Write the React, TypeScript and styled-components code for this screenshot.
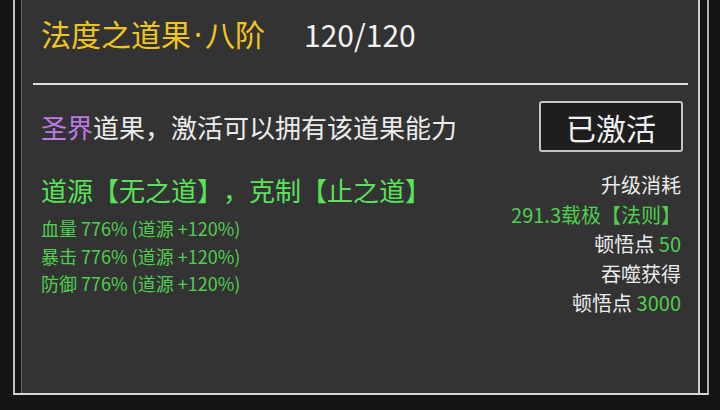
import styled, { createGlobalStyle } from 'styled-components'

const GlobalStyle = createGlobalStyle`
  html, body {
    margin: 0;
    padding: 0;
    background: #141414;
  }
  body {
    font-family: "Noto Sans CJK SC", "Noto Sans", sans-serif;
    color: #ececec;
    text-spacing-trim: space-all;
  }
`

const Frame = styled.div`
  box-sizing: border-box;
  margin-left: 13px;
  width: 696px;
  height: 395px;
  padding: 0 7px 0 6px;
  border-left: 2px solid #bdbdbd;
  border-right: 2px solid #b0b0b0;
  border-bottom: 2px solid #d6d6d6;
  background: #141414;
`

const Panel = styled.div`
  box-sizing: border-box;
  height: 100%;
  background: #333333;
  border-left: 1px solid #6a6a6a;
  border-right: 2px solid #cfcfcf;
  display: flex;
  flex-direction: column;
`

const Header = styled.div`
  display: flex;
  align-items: center;
  padding: 14px 0 0 19px;
  height: 40px;
`

const Title = styled.span`
  font-size: 30px;
  line-height: 40px;
  color: #f0c520;
`

// the reference uses a narrow latin middle dot
const Dot = styled.span`
  font-family: "Noto Sans", sans-serif;
  padding: 0 3px;
`

const Count = styled.span`
  margin-left: 39px;
  font-size: 30px;
  line-height: 40px;
  color: #f2f2f2;
`

const Divider = styled.hr`
  margin: 29px 10px 0 11px;
  border: none;
  height: 2px;
  background: #dcdcdc;
`

const ActivateRow = styled.div`
  display: flex;
  align-items: center;
  justify-content: space-between;
  margin-top: 16px;
  padding: 0 15px 0 19px;
`

const Desc = styled.span`
  font-size: 26px;
  line-height: 32px;
  color: #ececec;
`

const Tier = styled.span`
  color: #c07ae6;
`

const StateButton = styled.button`
  box-sizing: border-box;
  width: 144px;
  height: 51px;
  padding: 0;
  border: 2px solid #c4c4c4;
  border-radius: 3px;
  background: #1e1e1e;
  color: #f2f2f2;
  font-family: inherit;
  font-size: 30px;
  line-height: 1;
  cursor: pointer;
`

const Body = styled.div`
  display: flex;
  justify-content: space-between;
  align-items: flex-start;
  margin-top: 16px;
  padding: 0 17px 0 19px;
`

const LeftCol = styled.div`
  display: flex;
  flex-direction: column;
  padding-top: 6px;
`

const Origin = styled.div`
  font-size: 26px;
  line-height: 32px;
  color: #59e359;
  margin-bottom: 9px;
`

const StatLine = styled.div`
  font-size: 18px;
  line-height: 27.5px;
  color: #4fcf4f;
`

const RightCol = styled.div`
  display: flex;
  flex-direction: column;
  align-items: flex-end;
  padding-top: 2px;
`

const InfoLine = styled.div<{ $green?: boolean }>`
  font-size: 20px;
  line-height: 29.5px;
  color: ${p => (p.$green ? '#4fcf4f' : '#ececec')};
  white-space: nowrap;
`

const Value = styled.span`
  color: #4fcf4f;
`

const stats = ['血量', '暴击', '防御']

export default function App() {
  return (
    <>
      <GlobalStyle />
      <Frame>
        <Panel>
          <Header>
            <Title>
              法度之道果<Dot>·</Dot>八阶
            </Title>
            <Count>120/120</Count>
          </Header>
          <Divider />
          <ActivateRow>
            <Desc>
              <Tier>圣界</Tier>道果，激活可以拥有该道果能力
            </Desc>
            <StateButton>已激活</StateButton>
          </ActivateRow>
          <Body>
            <LeftCol>
              <Origin>道源【无之道】，克制【止之道】</Origin>
              {stats.map(s => (
                <StatLine key={s}>{s} 776% (道源 +120%)</StatLine>
              ))}
            </LeftCol>
            <RightCol>
              <InfoLine>升级消耗</InfoLine>
              <InfoLine $green>291.3载极【法则】</InfoLine>
              <InfoLine>
                顿悟点 <Value>50</Value>
              </InfoLine>
              <InfoLine>吞噬获得</InfoLine>
              <InfoLine>
                顿悟点 <Value>3000</Value>
              </InfoLine>
            </RightCol>
          </Body>
        </Panel>
      </Frame>
    </>
  )
}
